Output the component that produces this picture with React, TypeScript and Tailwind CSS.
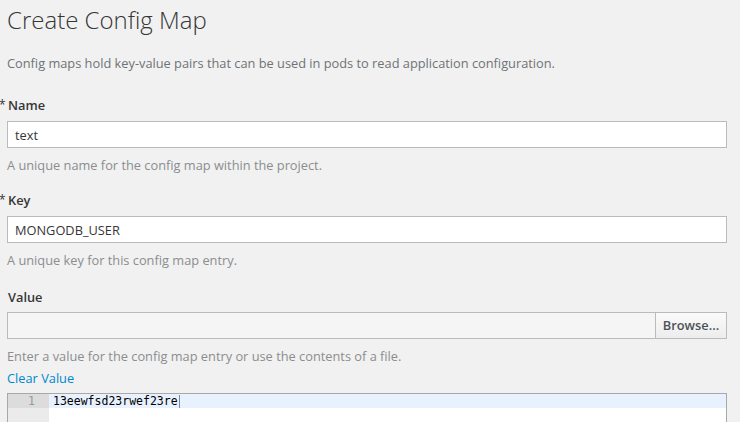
const field = 'block w-full h-[27px] border border-[#bbbbbb] bg-white px-[7px] text-[12.8px] text-[#363636] outline-none';

function Label({ text, required }: { text: string; required?: boolean }) {
  return (
    <div className="relative h-[18px] pl-px text-[12.8px] leading-[18px] font-semibold text-[#363636]">
      {required && <span className="absolute -left-[8px] top-0 text-[12px] font-normal">*</span>}
      {text}
    </div>
  );
}

function Help({ children }: { children: React.ReactNode }) {
  return <div className="h-[18px] text-[12.8px] leading-[18px] text-[#8b8d8f]">{children}</div>;
}

export default function App() {
  return (
    <div className="h-[422px] w-[740px] overflow-hidden bg-[#f1f1f1] pl-[7px] pr-[13px] font-['Open_Sans',sans-serif]">
      <h1 className="h-[40px] text-[24px] leading-[40px] font-light text-[#363636]">Create Config Map</h1>
      <p className="mt-[14px] h-[18px] text-[12.8px] leading-[18px] text-[#6f7377]">
        Config maps hold key-value pairs that can be used in pods to read application configuration.
      </p>

      <div className="mt-[24px]">
        <Label text="Name" required />
        <input className={`${field} mt-[7px]`} defaultValue="text" readOnly />
        <div className="mt-[8px]">
          <Help>A unique name for the config map within the project.</Help>
        </div>
      </div>

      <div className="mt-[17px]">
        <Label text="Key" required />
        <input className={`${field} mt-[7px]`} defaultValue="MONGODB_USER" readOnly />
        <div className="mt-[8px]">
          <Help>A unique key for this config map entry.</Help>
        </div>
      </div>

      <div className="mt-[19px]">
        <Label text="Value" />
        <div className="mt-[6px] flex h-[27px]">
          <div className="flex-1 border border-[#bbbbbb] bg-[#f5f5f5]" />
          <button className="-ml-px h-[27px] w-[72px] border border-[#bbbbbb] bg-gradient-to-b from-[#fafafa] to-[#ededed] text-[12.8px] font-semibold text-[#4d5258]">
            Browse...
          </button>
        </div>
        <div className="mt-[8px]">
          <Help>Enter a value for the config map entry or use the contents of a file.</Help>
        </div>
        <div className="mt-[4px] h-[18px] text-[12.8px] leading-[18px] text-[#0088ce]">Clear Value</div>
      </div>

      <div className="mt-[6px] flex h-[40px] border border-[#a8a8a8] bg-white">
        <div className="w-[41px] bg-[#ebebeb]">
          <div className="h-[14px] bg-[#dcdcdc] pr-[14px] text-right font-['DejaVu_Sans_Mono',monospace] text-[11.5px] leading-[14px] text-[#999999]">1</div>
        </div>
        <div className="flex-1">
          <div className="flex h-[14px] items-center bg-[#e8f2ff] pl-[4px] font-['DejaVu_Sans_Mono',monospace] text-[11.5px] leading-[14px] text-black">
            13eewfsd23rwef23re
            <span className="ml-px inline-block h-[13px] w-px bg-[#888888]" />
          </div>
        </div>
      </div>
    </div>
  );
}
